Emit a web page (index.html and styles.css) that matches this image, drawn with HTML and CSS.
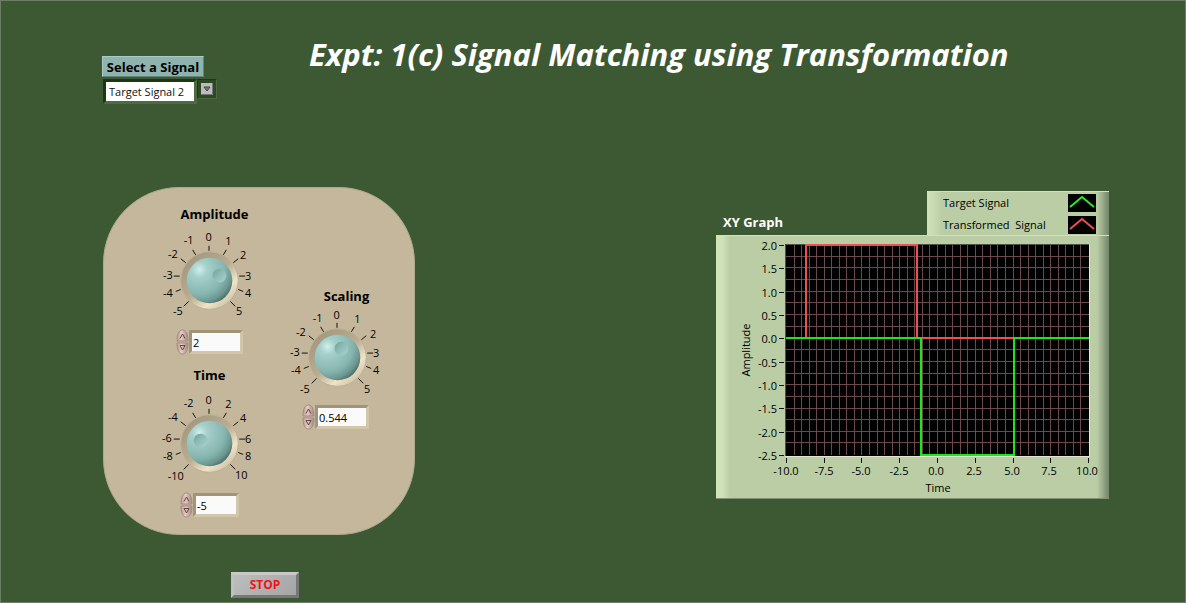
FILE: index.html
```html
<!DOCTYPE html>
<html lang="en">
<head>
<meta charset="utf-8">
<title>Expt: 1(c) Signal Matching using Transformation</title>
<link rel="stylesheet" href="styles.css">
</head>
<body>
<svg class="defs" width="0" height="0" aria-hidden="true">
  <defs>
    <radialGradient id="cap" cx=".28" cy=".26" r=".85">
      <stop offset="0" stop-color="#d0efec"/><stop offset=".2" stop-color="#a6d0cb"/><stop offset=".65" stop-color="#86b5af"/><stop offset=".85" stop-color="#6b9691"/><stop offset="1" stop-color="#456560"/>
    </radialGradient>
    <linearGradient id="bezel" x1=".15" y1=".1" x2=".85" y2=".9">
      <stop offset="0" stop-color="#a39780"/><stop offset=".5" stop-color="#b9ad92"/><stop offset=".78" stop-color="#efe3c8"/><stop offset="1" stop-color="#d0c3a7"/>
    </linearGradient>
    <linearGradient id="dent" x1="0" y1="0" x2="1" y2="1">
      <stop offset="0" stop-color="#6f9d99"/><stop offset=".45" stop-color="#8dbbb6"/><stop offset="1" stop-color="#acd4cf"/>
    </linearGradient>
    <linearGradient id="pink" x1="0" y1="0" x2="1" y2="0">
      <stop offset="0" stop-color="#b99a92"/><stop offset=".4" stop-color="#e4cbc3"/><stop offset="1" stop-color="#a48980"/>
    </linearGradient>
    <g id="knob-body">
      <circle cx="60" cy="53" r="29" fill="url(#bezel)" stroke="#bdb095"/>
      <circle cx="60" cy="53" r="23" fill="url(#cap)"/>
    </g>
    <path id="ticks" d="M59.500 23v-5M46 27l-3-5M36 35l-5-4M30 48.500h-6M31 62l-5 2M39 74l-5 5M74 27l3-5M84 35l5-4M90 48.500h6M89 62l5 2M81 74l5 5" fill="none" stroke="#111"/>
    <g id="spin">
      <path d="M1 12C1 5 3 1 6.500 1S12 5 12 12z" fill="url(#pink)" stroke="#a58c82"/>
      <path d="M1 14C1 21 3 25 6.500 25S12 21 12 14z" fill="url(#pink)" stroke="#a58c82"/>
      <path d="M4 9.500L6.500 5 9 9.500M4 16.500h5L6.500 21z" fill="none" stroke="#65453f"/>
    </g>
  </defs>
</svg>

<header class="top">
  <div class="picker">
    <label class="picker-label" for="signal">Select a Signal</label>
    <div class="picker-row">
      <select id="signal" class="picker-select"><option>Target Signal 1</option><option selected>Target Signal 2</option></select>
      <span class="picker-arrow"><svg width="12" height="12" viewBox="0 0 12 12"><rect width="12" height="12" fill="#bcbcbc"/><path d="M0 11.500h11.500V0" fill="none" stroke="#777"/><path d="M3 4h6L6 8z" fill="#777" stroke="#444"/></svg></span>
    </div>
  </div>
  <h1 class="title">Expt: 1(c) Signal Matching using Transformation</h1>
</header>

<main class="content">
  <section class="panel">
    <div class="stack">
      <div class="control">
        <label class="control-label control-label-mid" for="amp">Amplitude</label>
        <div class="dial">
          <svg viewBox="0 0 120 100"><use href="#knob-body"/><use href="#ticks"/><circle cx="70" cy="48" r="7" fill="url(#dent)"/>
            <g class="scale"><text x="59" y="13">0</text><text x="39" y="16">-1</text><text x="79" y="17">1</text><text x="23" y="30">-2</text><text x="94" y="31">2</text><text x="18" y="51">-3</text><text x="99" y="52">3</text><text x="18" y="70">-4</text><text x="99" y="70">4</text><text x="28" y="88">-5</text><text x="90" y="88">5</text></g></svg>
          <input class="dial-range" type="range" min="-5" max="5" value="2" aria-label="Amplitude knob">
        </div>
        <div class="number"><svg class="spin" viewBox="0 0 13 26"><use href="#spin"/></svg><input id="amp" class="field" type="text" value="2"></div>
      </div>
      <div class="control">
        <label class="control-label" for="time">Time</label>
        <div class="dial dial-low">
          <svg viewBox="0 0 120 100"><use href="#knob-body"/><use href="#ticks"/><circle cx="51" cy="50" r="7" fill="url(#dent)"/>
            <g class="scale"><text x="59" y="13">0</text><text x="39" y="16">-2</text><text x="79" y="17">2</text><text x="23" y="30">-4</text><text x="94" y="31">4</text><text x="17" y="51">-6</text><text x="99" y="52">6</text><text x="18" y="70">-8</text><text x="99" y="70">8</text><text x="26" y="90">-10</text><text x="92" y="89">10</text></g></svg>
          <input class="dial-range" type="range" min="-10" max="10" value="-5" aria-label="Time knob">
        </div>
        <div class="number"><svg class="spin" viewBox="0 0 13 26"><use href="#spin"/></svg><input id="time" class="field field-short" type="text" value="-5"></div>
      </div>
    </div>
    <div class="stack stack-right">
      <div class="control">
        <label class="control-label control-label-right" for="scaling">Scaling</label>
        <div class="dial dial-high">
          <svg viewBox="0 0 120 100"><use href="#knob-body"/><use href="#ticks"/><circle cx="64" cy="44" r="7" fill="url(#dent)"/>
            <g class="scale"><text x="59" y="14">0</text><text x="40" y="17">-1</text><text x="80" y="18">1</text><text x="23" y="31">-2</text><text x="96" y="33">2</text><text x="17" y="51">-3</text><text x="99" y="52">3</text><text x="18" y="70">-4</text><text x="99" y="70">4</text><text x="27" y="89">-5</text><text x="90" y="89">5</text></g></svg>
          <input class="dial-range" type="range" min="-5" max="5" step="0.001" value="0.544" aria-label="Scaling knob">
        </div>
        <div class="number number-high"><svg class="spin" viewBox="0 0 13 26"><use href="#spin"/></svg><input id="scaling" class="field" type="text" value="0.544"></div>
      </div>
    </div>
  </section>

  <section class="graph">
    <div class="graph-head">
      <h2 class="graph-title">XY Graph</h2>
      <ul class="legend">
        <li class="legend-row">Target Signal<svg class="swatch" viewBox="0 0 28 18"><path d="M2 13L14 3l12 10" stroke="#2bea2b"/></svg></li>
        <li class="legend-row">Transformed&nbsp; Signal<svg class="swatch" viewBox="0 0 28 18"><path d="M2 13L14 3l12 10" stroke="#ee5050"/></svg></li>
      </ul>
    </div>
    <div class="frame">
      <svg class="plot" viewBox="0 0 393 262" role="img" aria-label="XY Graph">
        <rect x="69" y="8" width="304" height="212" fill="#000"/>
        <path d="M78.500 8v211M85.500 8v211M93.500 8v211M100.500 8v211M108.500 8v211M115.500 8v211M123.500 8v211M130.500 8v211M138.500 8v211M145.500 8v211M153.500 8v211M161.500 8v211M168.500 8v211M176.500 8v211M183.500 8v211M191.500 8v211M198.500 8v211M206.500 8v211M213.500 8v211M221.500 8v211M229.500 8v211M236.500 8v211M244.500 8v211M251.500 8v211M259.500 8v211M266.500 8v211M274.500 8v211M281.500 8v211M289.500 8v211M297.500 8v211M304.500 8v211M312.500 8v211M319.500 8v211M327.500 8v211M334.500 8v211M342.500 8v211M349.500 8v211M357.500 8v211M364.500 8v211M70 20.500h303M70 31.500h303M70 43.500h303M70 55.500h303M70 66.500h303M70 78.500h303M70 90.500h303M70 102.500h303M70 113.500h303M70 125.500h303M70 137.500h303M70 148.500h303M70 160.500h303M70 172.500h303M70 183.500h303M70 195.500h303M70 206.500h303" fill="none" stroke="#6a4a4a"/>
        <path d="M69.500 220V8.500H373" fill="none" stroke="#4d5148"/>
        <path d="M69 220.500h304.500V8" fill="none" stroke="#e0ead0"/>
        <path d="M70 102h20V9h111v93h97" fill="none" stroke="#ee5050" stroke-width="2"/>
        <path d="M70 102h135v117h93V102h75" fill="none" stroke="#1ee61e" stroke-width="2"/>
        <path d="M63 9.500h5M63 32.500h5M63 56.500h5M63 79.500h5M63 102.500h5M63 126.500h5M63 149.500h5M63 172.500h5M63 196.500h5M63 219.500h5M70.500 222v5M108.500 222v5M145.500 222v5M183.500 222v5M221.500 222v5M259.500 222v5M297.500 222v5M334.500 222v5M372.500 222v5" fill="none" stroke="#111"/>
        <g class="axis-y"><text x="61" y="14">2.0</text><text x="61" y="37">1.5</text><text x="61" y="61">1.0</text><text x="61" y="84">0.5</text><text x="61" y="107">0.0</text><text x="61" y="131">-0.5</text><text x="61" y="154">-1.0</text><text x="61" y="177">-1.5</text><text x="61" y="201">-2.0</text><text x="61" y="224">-2.5</text></g>
        <g class="scale"><text x="70" y="239">-10.0</text><text x="108" y="239">-7.5</text><text x="145" y="239">-5.0</text><text x="183" y="239">-2.5</text><text x="220" y="239">0.0</text><text x="258" y="239">2.5</text><text x="296" y="239">5.0</text><text x="333" y="239">7.5</text><text x="371" y="239">10.0</text><text x="222" y="256">Time</text><text transform="translate(34 114) rotate(-90)">Amplitude</text></g>
      </svg>
    </div>
  </section>
</main>

<footer class="bottom"><button class="stop" type="button">STOP</button></footer>
</body>
</html>
```

FILE: styles.css
```css
* { box-sizing: border-box; }

body {
  margin: 0;
  min-height: 100vh;
  border: 1px solid #6c7f66;
  background: #3d5934;
  color: #000;
  font: 12px/16px "Open Sans", "Noto Sans", sans-serif;
  display: flex;
  flex-direction: column;
}

.defs { position: absolute; }

.top {
  display: flex;
  align-items: flex-start;
  gap: 92px;
  padding: 32px 101px 0;
}

.picker { width: 115px; padding-top: 23px; }

.picker-label {
  display: inline-block;
  width: 102px;
  height: 21px;
  border: 1px solid #a9cac5;
  border-right-color: #62847c;
  border-bottom-color: #62847c;
  background: #8fb3ae;
  font-size: 13px;
  font-weight: 700;
  line-height: 21px;
  text-align: center;
  white-space: nowrap;
}

.picker-row { display: flex; align-items: flex-start; padding-left: 1px; margin-top: 2px; }

.picker-select {
  appearance: none;
  width: 96px;
  height: 25px;
  padding: 0 3px;
  border: 3px solid;
  border-color: #1c3813 #4d6b43 #4d6b43 #1c3813;
  border-radius: 0;
  background: #fff;
  color: #111;
  font: 11px/16px "Open Sans", "Noto Sans", sans-serif;
}

.picker-arrow {
  display: flex;
  padding: 3px;
  border: 1px solid;
  border-color: #1c3813 #4d6b43 #4d6b43 #1c3813;
  background: #2d4824;
}

.title {
  margin: 0;
  color: #fff;
  font-size: 31px;
  font-style: italic;
  font-weight: 700;
  line-height: 42px;
  white-space: nowrap;
}

.content {
  display: flex;
  justify-content: space-between;
  align-items: flex-start;
  padding: 83px 76px 0 102px;
}

.panel {
  display: flex;
  width: 312px;
  min-height: 348px;
  padding: 18px 17px 0 46px;
  border: 1px solid #aea98a;
  border-radius: 76px;
  background: #c4b79c;
}

.stack { display: flex; flex-direction: column; gap: 12px; width: 120px; }
.stack-right { margin-left: 9px; padding-top: 82px; }
.control { display: flex; flex-direction: column; }

.control-label {
  font-size: 13px;
  font-weight: 700;
  line-height: 16px;
  text-align: center;
}

.control-label-mid { padding-left: 10px; }
.control-label-right { padding-left: 18px; }

.dial { position: relative; margin-top: 6px; }
.dial-low { margin-top: 8px; }
.dial-high { margin-top: 1px; }
.dial svg { display: block; width: 100%; }

.dial-range {
  position: absolute;
  inset: 0;
  width: 100%;
  height: 100%;
  margin: 0;
  opacity: 0;
}

.scale text { font-size: 11px; text-anchor: middle; fill: #000; }
.axis-y text { font-size: 11px; text-anchor: end; fill: #000; }

.number { display: flex; justify-content: center; align-items: center; margin-top: 2px; }
.number-high { margin-top: 0; padding-right: 4px; }
.spin { width: 13px; height: 26px; }

.field {
  width: 54px;
  height: 24px;
  padding: 0 1px;
  border: 3px solid;
  border-color: #a0947b #d2c6aa #d2c6aa #a0947b;
  border-radius: 0;
  background: #fafafa;
  color: #000;
  font: 11px/16px "Open Sans", "Noto Sans", sans-serif;
}

.field-short { width: 46px; }

.graph { width: 393px; padding-top: 4px; }
.graph-head { display: flex; justify-content: space-between; align-items: flex-end; }

.graph-title {
  margin: 0;
  padding: 0 0 5px 7px;
  color: #fff;
  font-size: 13px;
  font-weight: 700;
  line-height: 16px;
}

.legend {
  width: 182px;
  margin: 0;
  padding: 0 13px 0 15px;
  border: solid #d0e3b8;
  border-width: 1px 0 0 1px;
  background: linear-gradient(90deg, #d0e3b8 0, #bacda5 14px, #bacda5 calc(100% - 12px), #73846a 100%);
  list-style: none;
}

.legend-row {
  display: flex;
  justify-content: space-between;
  align-items: center;
  height: 21px;
  font-size: 11px;
  line-height: 20px;
  white-space: nowrap;
}

.legend-row + .legend-row { margin-top: 1px; }

.swatch {
  width: 28px;
  height: 18px;
  background: #000;
  fill: none;
  stroke-width: 2;
}

.frame {
  border-top: 1px solid #d0e3b8;
  border-bottom: 1px solid #81936f;
  background: linear-gradient(90deg, #d0e3b8 0, #d0e3b8 6px, #bacda5 14px, #bacda5 calc(100% - 12px), #73846a 100%);
}

.plot { display: block; width: 100%; }

.bottom { padding: 37px 0 4px 230px; }

.stop {
  display: block;
  width: 68px;
  height: 26px;
  padding: 0;
  border: 3px solid;
  border-color: #c8c8c8 #777 #777 #c0c0c0;
  border-radius: 0;
  background: linear-gradient(135deg, #bdbdbd, #a5a5a5);
  color: #f01414;
  font: 700 12px/16px "Open Sans", "Noto Sans", sans-serif;
}
```
